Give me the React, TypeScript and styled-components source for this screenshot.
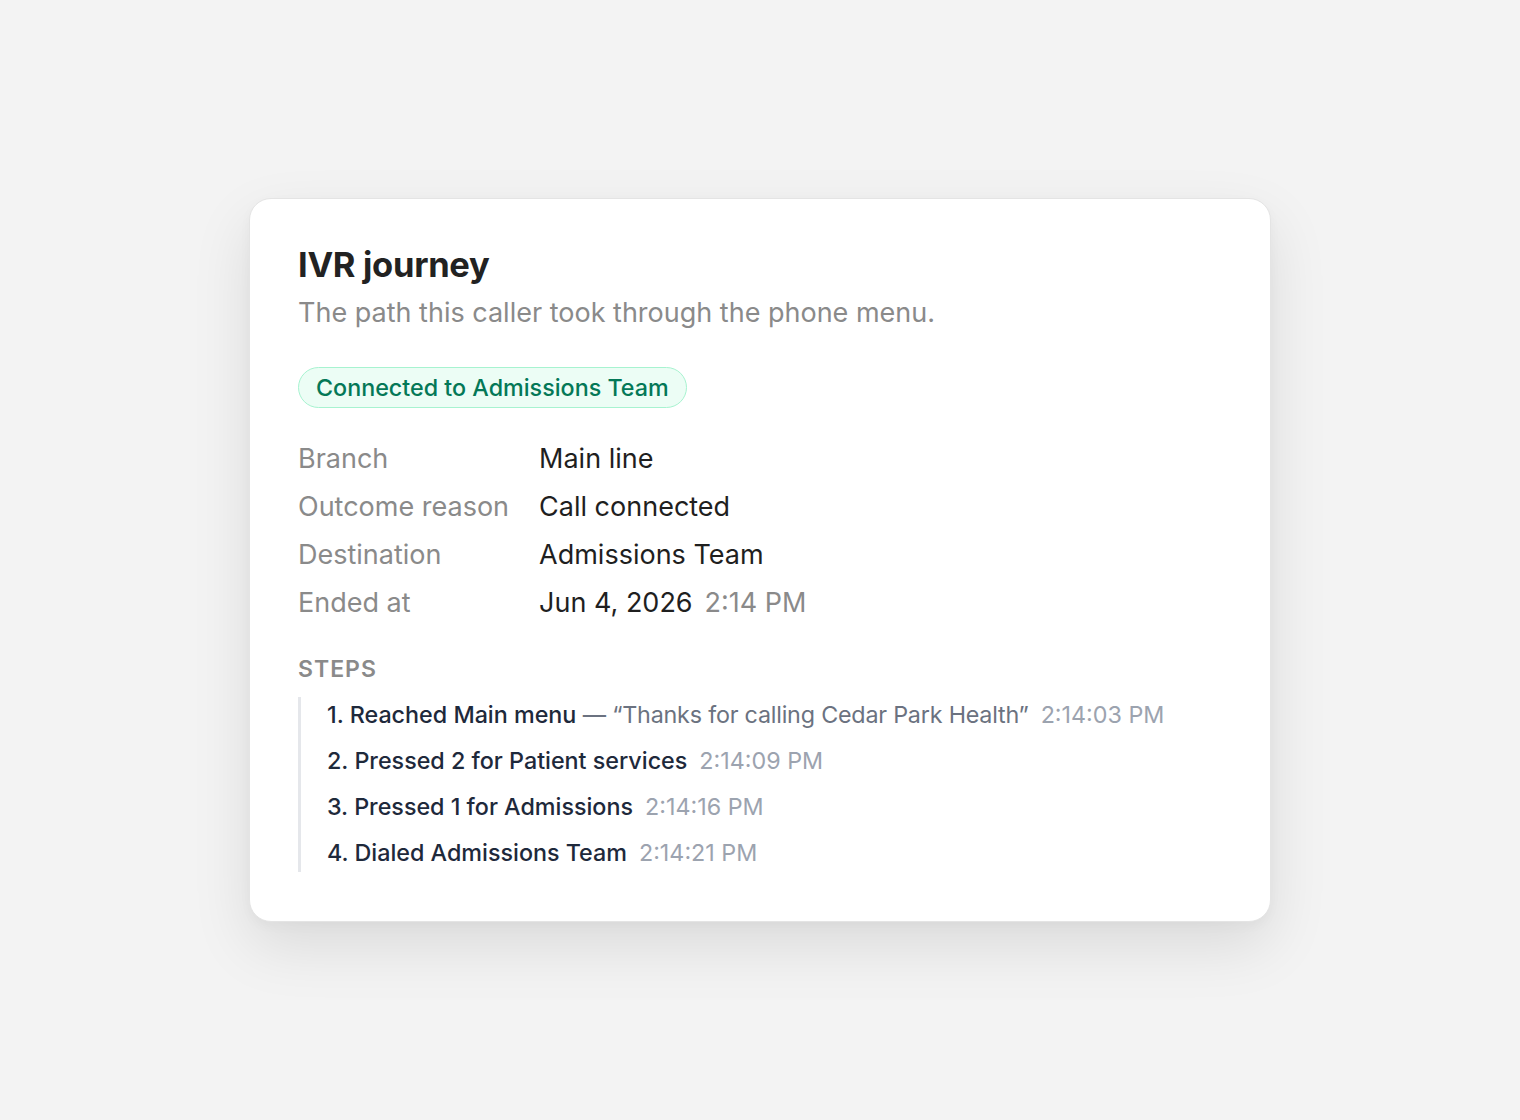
import React from 'react';
import styled, { createGlobalStyle } from 'styled-components';

const GlobalStyle = createGlobalStyle`
  html, body {
    margin: 0;
    padding: 0;
    background: #f3f3f3;
  }

  body {
    font-family: Inter, 'Noto Sans', 'Liberation Sans', sans-serif;
    -webkit-font-smoothing: antialiased;
  }
`;

type Detail = { label: string; value: string; extra?: string };
type Step = { text: string; quote?: string; time: string };

const details: Detail[] = [
  { label: 'Branch', value: 'Main line' },
  { label: 'Outcome reason', value: 'Call connected' },
  { label: 'Destination', value: 'Admissions Team' },
  { label: 'Ended at', value: 'Jun 4, 2026', extra: '2:14 PM' },
];

const steps: Step[] = [
  { text: '1. Reached Main menu', quote: 'Thanks for calling Cedar Park Health', time: '2:14:03 PM' },
  { text: '2. Pressed 2 for Patient services', time: '2:14:09 PM' },
  { text: '3. Pressed 1 for Admissions', time: '2:14:16 PM' },
  { text: '4. Dialed Admissions Team', time: '2:14:21 PM' },
];

const App = (): JSX.Element => (
  <>
    <GlobalStyle />
    <Page>
      <Card>
        <Title>IVR journey</Title>
        <Subtitle>The path this caller took through the phone menu.</Subtitle>

        <Badge>Connected to Admissions Team</Badge>

        <DetailGrid>
          {details.map((d) => (
            <React.Fragment key={d.label}>
              <Label>{d.label}</Label>
              <Value>
                {d.value}
                {d.extra && <Muted>{d.extra}</Muted>}
              </Value>
            </React.Fragment>
          ))}
        </DetailGrid>

        <SectionHeading>Steps</SectionHeading>
        <StepList>
          {steps.map((s) => (
            <StepItem key={s.text}>
              <StepText>{s.text}</StepText>
              {s.quote && <Quote> — “{s.quote}”</Quote>}
              <StepTime>{s.time}</StepTime>
            </StepItem>
          ))}
        </StepList>
      </Card>
    </Page>
  </>
);

const Page = styled.div`
  min-height: 100vh;
  display: flex;
  align-items: center;
  justify-content: center;
`;

const Card = styled.section`
  box-sizing: border-box;
  width: 1022px;
  padding: 45px 48px 49px;
  background: #ffffff;
  border: 1px solid #e4e4e4;
  border-radius: 22px;
  box-shadow: 0 24px 60px rgba(0, 0, 0, 0.1), 0 4px 12px rgba(0, 0, 0, 0.03);
  display: flex;
  flex-direction: column;
  align-items: flex-start;
`;

const Title = styled.h1`
  margin: 0;
  font-size: 34.5px;
  line-height: 42px;
  font-weight: 700;
  color: #222222;
  letter-spacing: -0.3px;
`;

const Subtitle = styled.p`
  margin: 8px 0 0;
  font-size: 27px;
  line-height: 38px;
  color: #8a8a8a;
`;

const Badge = styled.span`
  margin-top: 35px;
  padding: 3px 17px;
  font-size: 23.3px;
  line-height: 33px;
  font-weight: 500;
  color: #047857;
  background: #ecfdf5;
  border: 1px solid #a7f3d0;
  border-radius: 999px;
`;

const DetailGrid = styled.dl`
  margin: 27px 0 0;
  display: grid;
  grid-template-columns: max-content 1fr;
  column-gap: 30px;
  font-size: 27px;
  line-height: 48px;
`;

const Label = styled.dt`
  color: #8a8a8a;
`;

const Value = styled.dd`
  margin: 0;
  color: #1f1f1f;
`;

const Muted = styled.span`
  margin-left: 12px;
  color: #8a8a8a;
`;

const SectionHeading = styled.h2`
  margin: 26px 0 0;
  font-size: 23px;
  line-height: 32px;
  font-weight: 600;
  letter-spacing: 1px;
  text-transform: uppercase;
  color: #8a8a8a;
`;

const StepList = styled.ol`
  list-style: none;
  margin: 12px 0 0;
  padding: 3px 0 4px 26px;
  border-left: 3px solid #e5e7eb;
  display: flex;
  flex-direction: column;
  gap: 16px;
`;

const StepItem = styled.li`
  font-size: 23.3px;
  line-height: 30px;
  color: #1e293b;
`;

const StepText = styled.span`
  font-weight: 500;
`;

const Quote = styled.span`
  color: #6b7280;
  letter-spacing: -0.2px;
`;

const StepTime = styled.span`
  margin-left: 12px;
  color: #9ca3af;
`;

export default App;
